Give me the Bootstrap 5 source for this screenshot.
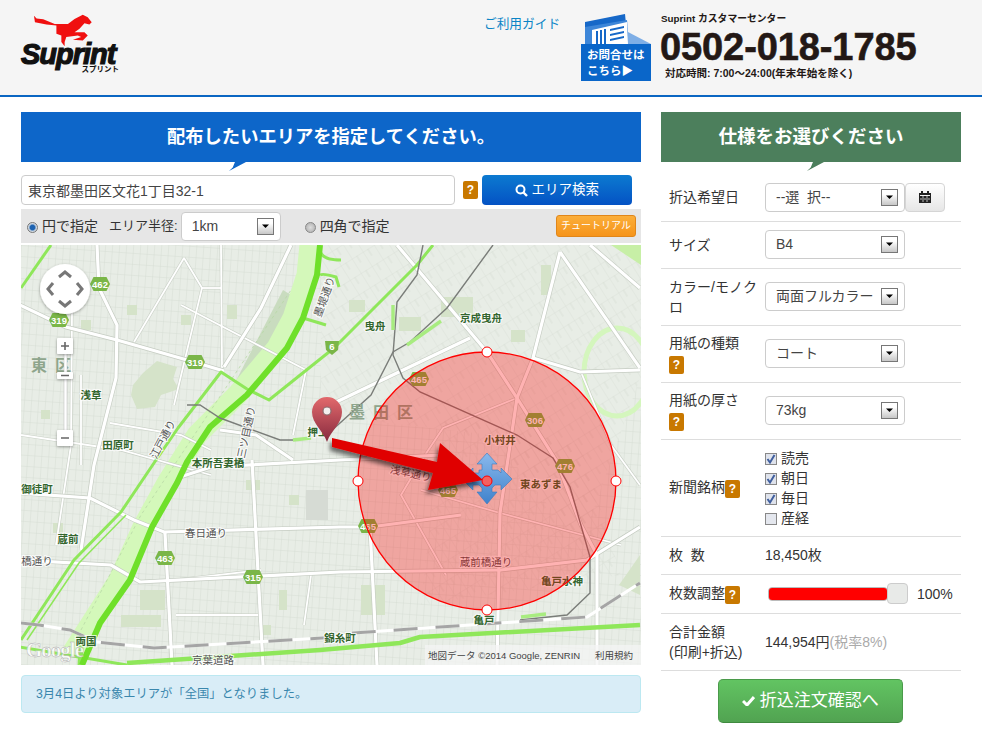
<!DOCTYPE html>
<html lang="ja">
<head>
<meta charset="UTF-8">
<meta name="viewport" content="width=device-width, initial-scale=1.0">
<title>Suprint</title>
<link href="https://cdn.jsdelivr.net/npm/bootstrap@5.3.0/dist/css/bootstrap.min.css" rel="stylesheet">
<style>
    body {
        background: #fff;
        color: #333;
        font-family: "Liberation Sans", "Noto Sans CJK JP", sans-serif;
        font-size: 14px;
        overflow: hidden;
    }
    .site-head {
        height: 97px;
        background: #f5f5f5;
        border-bottom: 2px solid #0a66c2;
    }
    .logo-box { width: 98px; margin: 14px 0 0 21px; }
    .logo-box svg { display: block; margin-left: 12px; }
    .logo-word {
        font-size: 29px; line-height: 20px; font-weight: 700; font-style: italic;
        color: #111; letter-spacing: -1px; -webkit-text-stroke: 1.2px #111;
        margin-top: -3px; white-space: nowrap;
    }
    .logo-kana { font-size: 7.500px; line-height: 8px; font-weight: 700; color: #111; text-align: right; margin-top: 2px; }
    .guide-link { margin: 14px 0 0 365px; width: 76px; font-size: 12.7px; line-height: 20px; color: #0a84c6; text-decoration: none; white-space: nowrap; }
    .contact-box { width: 70px; margin: 14px 0 0 21px; }
    .contact-box svg { display: block; }
    .contact-text {
        background: #0a66c9; color: #fff; height: 37px; font-size: 11.5px; line-height: 16px;
        font-weight: 700; padding: 3px 0 0 6px; white-space: nowrap;
    }
    .center-box { margin: 12px 0 0 9px; color: #231815; }
    .center-name { font-size: 9.8px; line-height: 14px; font-weight: 700; padding-left: 1px; }
    .center-tel { font-size: 38px; line-height: 40px; font-weight: 700; letter-spacing: -.1px; -webkit-text-stroke: .6px #231815; margin-top: 1px; }
    .center-hours { font-size: 10.5px; line-height: 13px; font-weight: 700; padding-left: 5px; }

    .page-main { padding: 15px 21px 0; gap: 20px; }
    .col-area { width: 620px; }
    .col-spec { width: 300px; }
    .title-band {
        position: relative; height: 50px; line-height: 50px; text-align: center;
        font-size: 18.3px; font-weight: 700; color: #fff;
    }
    .title-band::after {
        content: ""; position: absolute; top: 50px; left: 208px; width: 17px; height: 9px;
        background: inherit; clip-path: polygon(35% 0, 100% 0, 0 100%, 22% 60%);
    }
    .band-blue { background: #0d66c9; }
    .band-green { background: #4c7f5c; font-size: 18.5px; }
    .band-green::after { left: 146px; }

    .address-input, .address-input:focus {
        width: 434px; height: 30px; padding: 0 6px; font-size: 14px; color: #444;
        border: 1px solid #ccc; border-radius: 4px; box-shadow: none;
    }
    .help-mark {
        display: inline-block; width: 15px; height: 18px; line-height: 18px; text-align: center;
        background: #c87800; color: #fff; font-size: 12px; font-weight: 700; border-radius: 2px;
        vertical-align: middle;
    }
    .search-btn, .search-btn:hover {
        width: 150px; height: 30px; padding: 0; font-size: 13.5px; color: #fff; border: 0; border-radius: 4px;
        background: linear-gradient(#0c7ad0, #0452c4);
    }
    .radius-bar { height: 34px; background: #e6e6e6; padding: 0 5px 0 6px; margin-top: 4px; }
    .radius-bar .form-check-input {
        width: 11px; height: 11px; margin: 3px 4px 0 0; border: 1px solid #888; flex: none;
        background: radial-gradient(circle, #ddd, #aaa);
    }
    .radius-bar .form-check-input:checked { background: radial-gradient(circle, #1d62b0 35%, #cfd8e2 60%); border-color: #777; }
    .radius-label { margin-left: 11px; font-size: 13px; white-space: nowrap; }
    .tutorial-btn, .tutorial-btn:hover {
        width: 80px; height: 22px; padding: 0; font-size: 10px; line-height: 20px; color: #fff;
        background: linear-gradient(#fbae3a, #f6941a); border: 1px solid #e0861a; border-radius: 3px;
    }
    .old-select, .old-select:focus {
        height: 29px; padding: 0 24px 0 10px; font-size: 14px; color: #444; border: 1px solid #ccc; border-radius: 4px;
        box-shadow: none; background-color: #fff; background-size: 17px 17px; background-position: right 6px center;
        background-image: url("data:image/svg+xml,%3Csvg xmlns='http://www.w3.org/2000/svg' viewBox='0 0 17 17'%3E%3ClinearGradient id='g' x2='0' y2='1'%3E%3Cstop offset='.3' stop-color='%23fff'/%3E%3Cstop offset='1' stop-color='%23c4c4c4'/%3E%3C/linearGradient%3E%3Crect x='.5' y='.5' width='16' height='16' fill='url(%23g)' stroke='%23777'/%3E%3Cpath d='M5 6.5h7l-3.5 3.5z'/%3E%3C/svg%3E");
    }
    .radius-select { width: 100px; margin: 0 24px 0 3px; }
    .map-box { margin-top: 2px; height: 420px; }
    .map-box svg { display: block; }
    .map-label { font-size: 10.5px; font-weight: 700; fill: #33662e; stroke: #fff; stroke-width: 2.2px; stroke-opacity: .75; paint-order: stroke; text-anchor: middle; }
    .map-road-label { font-size: 10.5px; fill: #555; stroke: #fff; stroke-width: 2.2px; stroke-opacity: .8; paint-order: stroke; text-anchor: middle; }
    .map-shield { font-size: 9.5px; font-weight: 700; fill: #fff; text-anchor: middle; }
    .map-ward { font-size: 16px; font-weight: 700; fill: #8ea58c; text-anchor: middle; }
    .map-fine { font-size: 9.5px; fill: #444; }
    .map-google { font-family: "Liberation Serif", serif; font-size: 21px; font-weight: 700; fill: #fff; fill-opacity: .85; stroke: #aaa; stroke-width: .4px; }
    .notice-box {
        height: 38px; margin: 10px 0 0; padding: 0 14px; line-height: 36px; font-size: 12.3px;
        color: #3a87ad; background: #d9edf7; border: 1px solid #bce8f1; border-radius: 4px;
    }

    .spec-table { margin: 12px 0 0; table-layout: fixed; --bs-table-color: #333; --bs-table-border-color: #ddd; }
    .spec-table td { padding: 0 0 0 8px; vertical-align: middle; font-size: 14px; line-height: 20px; border-bottom-width: 1px; }
    .spec-table td:first-child { width: 104px; padding-right: 4px; }
    .spec-table td:last-child { padding-left: 0; }
    .spec-select { width: 140px; }
    .cal-btn, .cal-btn:hover {
        width: 40px; height: 29px; padding: 0; border: 1px solid #d5d5d5; border-radius: 4px;
        background: linear-gradient(#fff, #e6e6e6);
    }
    .paper-row { height: 57px; }
    .check-line { line-height: 20px; }
    .check-line .form-check-input {
        width: 12px; height: 12px; margin: 0 4px 0 0; border: 1px solid #888; border-radius: 0; float: none;
        vertical-align: -2px; background-color: #e4e7ee;
    }
    .check-line .form-check-input:checked {
        background-color: #dfe3ec; background-size: 12px;
        background-image: url("data:image/svg+xml,%3Csvg xmlns='http://www.w3.org/2000/svg' viewBox='0 0 12 12'%3E%3Cpath d='M2.5 6l2.5 3.5L9.5 2' fill='none' stroke='%23405f9e' stroke-width='2'/%3E%3C/svg%3E");
    }
    .rate-bar { width: 120px; height: 14px; margin-left: 3px; background: #ddd; border: 1px solid #bbb; border-radius: 4px; }
    .rate-fill { background: #f00; }
    .rate-handle { width: 21px; height: 21px; margin: 0 9px 0 -1px; background: #e8eae8; border: 1px solid #ccc; border-radius: 4px; flex: none; }
    .tax-note { color: #aaa; }
    .order-btn, .order-btn:hover {
        display: block; width: 185px; height: 44px; margin: 8px auto 0 57px; padding: 0; font-size: 17px; color: #fff;
        background: linear-gradient(#62c462, #51a351); border: 1px solid #4a9a4a; border-bottom-color: #3f8a3f; border-radius: 5px;
    }
</style>
</head>
<body>
    <header class="site-head d-flex">
        <div class="logo-box">
            <svg width="60" height="33" viewBox="100 40 180 100"><path fill="#f01010" d="M102 45l8 9 20 2 35 14h40l20-15 25-13 15 8 12 15-7 7-15-4-15 17-15 10h30l10 10-15 15-30-2 25-8-10-5-35 5-5 15v13l-10-13v-20l-15-5v-25l-30-3-35-7z"/></svg>
            <div class="logo-word">Suprint</div>
            <div class="logo-kana">スプリント</div>
        </div>
        <a class="guide-link" href="#">ご利用ガイド</a>
        <div class="contact-box">
            <svg width="70" height="30" viewBox="0 0 70 30">
                <path fill="#1668c8" d="M4 8L44 0l3 30H4z"/>
                <path fill="#3d86d8" d="M4 13l42-7 2 24H4z"/>
                <path fill="#fff" d="M11 16l35-8 1 22H11z"/>
                <path fill="#1668c8" d="M15 17h2v13h-2zM19 16h2v14h-2zM23 15h2v15h-2zM29 15l14-3v2l-14 3zM29 20l14-3v2l-14 3zM29 25l14-3v2l-14 3z"/>
                <path fill="#7eaee6" d="M47 18l23 12H47z"/>
            </svg>
            <div class="contact-text">お問合せは<br>こちら▶</div>
        </div>
        <div class="center-box">
            <div class="center-name">Suprint カスタマーセンター</div>
            <div class="center-tel">0502-018-1785</div>
            <div class="center-hours">対応時間: 7:00〜24:00(年末年始を除く)</div>
        </div>
    </header>

    <main class="page-main d-flex">
        <section class="col-area">
            <div class="title-band band-blue">配布したいエリアを指定してください。</div>
            <div class="d-flex align-items-center" style="margin-top:13px">
                <input type="text" class="form-control address-input" value="東京都墨田区文花1丁目32-1">
                <span class="help-mark ms-2 me-1">?</span>
                <button class="btn search-btn">
                    <svg width="13" height="13" viewBox="0 0 13 13" class="align-middle"><circle cx="5.5" cy="5.5" r="4" fill="none" stroke="#fff" stroke-width="2"/><path d="M8.5 8.5l3.5 3.5" stroke="#fff" stroke-width="2.4"/></svg>
                    エリア検索
                </button>
            </div>
            <div class="radius-bar d-flex align-items-center">
                <input class="form-check-input" type="radio" name="shape" checked>
                <span>円で指定</span>
                <span class="radius-label">エリア半径:</span>
                <select class="form-select old-select radius-select"><option>1km</option></select>
                <input class="form-check-input" type="radio" name="shape">
                <span>四角で指定</span>
                <button class="btn tutorial-btn ms-auto">チュートリアル</button>
            </div>
            <div class="map-box">
                <svg width="620" height="420" viewBox="0 0 620 420">
                    <defs>
                        <pattern id="blockA" width="7" height="11" patternUnits="userSpaceOnUse" patternTransform="rotate(4)">
                            <path d="M0 0H7M0 0V11" stroke="#d3d9d0" stroke-width=".8" fill="none"/>
                        </pattern>
                        <pattern id="blockB" width="13" height="17" patternUnits="userSpaceOnUse" patternTransform="rotate(-32)">
                            <path d="M0 0H13M0 0V17M6 0V8" stroke="#d6dcd3" stroke-width=".7" fill="none"/>
                        </pattern>
                        <linearGradient id="pinFill" x2="0" y2="1"><stop offset="0" stop-color="#e2696c"/><stop offset="1" stop-color="#872a3e"/></linearGradient>
                        <linearGradient id="moveFill" x2="0" y2="1"><stop offset="0" stop-color="#8ab9ec"/><stop offset="1" stop-color="#3f82cc"/></linearGradient>
                        <filter id="arrowShadow" x="-20%" y="-30%" width="140%" height="170%"><feDropShadow dx="-2" dy="4" stdDeviation="2" flood-color="#000" flood-opacity=".55"/></filter>
                        <filter id="softShadow" x="-20%" y="-20%" width="140%" height="140%"><feDropShadow dx="0" dy="1" stdDeviation="1.5" flood-color="#000" flood-opacity=".35"/></filter>
                        <polygon id="shieldShape" points="-10,0 -6.500,-7 6.500,-7 10,0 6.500,7 -6.500,7" fill="#7ab648"/>
                        <g id="bigRoads" fill="none">
                            <path d="M-1 60L45 82 96 95 166 115 203 126"/>
                            <path d="M203 122L240 63 270 0"/>
                            <path d="M76 0L78 43 96 80 95 133 73 220 60 305"/>
                            <path d="M159 232L190 222 319 215 420 210"/>
                            <path d="M-1 315L90 320 119 337 319 327 480 325 566 315 619 282"/>
                            <path d="M376 0L466 107 496 153 536 217 560 280 576 310 576 420"/>
                            <path d="M569 0L619 43"/>
                            <path d="M539 7L619 123"/>
                            <path d="M512 113L559 127 619 125"/>
                            <path d="M539 7L512 113 496 153 479 268 476 420"/>
                            <path d="M449 93L309 160"/>
                            <path d="M-1 248L69 253 113 275 143 287 319 282 349 282 440 270"/>
                            <path d="M231 215L242 420"/>
                            <path d="M144 288L151 420"/>
                            <path d="M349 282L356 420"/>
                            <path d="M199 185L235 190 272 215"/>
                        </g>
                        <g id="smallRoads" fill="none">
                            <path d="M163 13L113 97"/>
                            <path d="M163 13L181 43 153 160"/>
                            <path d="M200 0L201 123"/>
                            <path d="M181 43H200"/>
                            <path d="M51 65L50 200 35 300"/>
                            <path d="M89 178L160 190 190 205"/>
                            <path d="M0 190L100 205 190 230"/>
                            <path d="M155 335L240 325M155 370H240"/>
                            <path d="M422 183L496 153M422 183L402 213 380 250 425 330"/>
                            <path d="M400 245L479 268 600 300"/>
                            <path d="M160 60L285 125 272 190"/>
                            <path d="M560 127L590 200 619 240"/>
                            <path d="M290 330L283 380M60 220L60 130"/>
                        </g>
                    </defs>

                    <rect width="620" height="420" fill="#e8ede6"/>
                    <rect width="620" height="420" fill="url(#blockA)"/>
                    <path d="M300 0H620V130L560 300 470 190 300 170z" fill="#e8ede6"/>
                    <path d="M300 0H620V130L560 300 470 190 300 170z" fill="url(#blockB)"/>
                    <path d="M420 170L560 200 600 330 400 360z" fill="url(#blockB)"/>

                    <!-- parks -->
                    <g fill="#d5e3c9">
                        <path d="M112 140l10-12 14-12 20 6-4 12 6 10-18 6-6 12-18 2-6-14z"/>
                        <path d="M60 75h10v10H60zM106 60h10v10h-10zM206 60h10v14h-10zM160 70h10v10h-10zM20 165h9v9h-9zM238 110h10v10h-10z"/>
                        <path d="M378 72h22v14h-22zM328 55h16v12h-16zM420 52h32v20h-32zM520 20h10v30h-10zM490 85h14v12h-14z"/>
                        <path d="M32 278h10v10H32zM225 235h14v10h-14zM268 250h10v10h-10zM120 265h10v10h-10zM258 345h8v20h-8zM240 380h10v10h-10z"/>
                        <path d="M119 345h25v20h-25zM100 370h40v12h-40zM340 340h24v30h-24zM598 340l21-30v40z"/>
                    </g>
                    <path d="M205 155L262 45 278 55 226 150z" fill="#c9dcbf"/>
                    <path d="M590 0H620V20z" fill="#c7efa6"/>
                    <rect x="285" y="245" width="22" height="30" fill="#d6dbd4"/>
                    <ellipse cx="596" cy="127" rx="33" ry="44" fill="none" stroke="#d4f6bd" stroke-width="5"/>

                    <!-- river park -->
                    <path d="M50 410L98 335 122 282 146 238 176 190 216 150 256 103 272 73 286 30 289 0" fill="none" stroke="#d4f8ba" stroke-width="21"/>
                    <path d="M60 385L120 270 190 165 270 45" fill="none" stroke="#b8d8a6" stroke-width=".8" stroke-dasharray="3 3"/>

                    <!-- roads -->
                    <use href="#smallRoads" stroke="#c9d0c6" stroke-width="3"/>
                    <use href="#smallRoads" stroke="#fff" stroke-width="1.8"/>
                    <use href="#bigRoads" stroke="#c5ccc2" stroke-width="4.5"/>
                    <use href="#bigRoads" stroke="#fff" stroke-width="3.2"/>

                    <!-- green roads -->
                    <g fill="none" stroke="#8fe75a" stroke-linejoin="round">
                        <path d="M0 43L30 0" stroke-width="3"/>
                        <path d="M0 395L53 315 100 267 133 218 157 183 200 127 226 144 248 155 313 103 396 20 412 0" stroke-width="3"/>
                        <path d="M6 395L58 318 105 270" stroke-width="1.5"/>
                        <path d="M-1 402L106 420" stroke-width="3"/>
                        <path d="M106 418L299 405 379 398 399 392 619 380" stroke-width="4.5"/>
                        <path d="M60 400L59 420" stroke-width="5"/>
                        <path d="M282 73L305 80" stroke-width="3"/>
                        <path d="M299 5Q300 15 320 15" stroke-width="3"/>
                        <path d="M299 30Q302 28 315 32L318 42" stroke-width="3"/>
                    </g>
                    <path d="M61 420L79 378 109 335 131 282 156 238 166 217 189 182 226 150 266 103 282 73 296 30 299 0" fill="none" stroke="#6fe02a" stroke-width="6"/>

                    <!-- railway -->
                    <g fill="none" stroke="#7a7d79" stroke-width="1.4">
                        <path d="M402 0L396 30 376 57 372 110 382 133 399 147 496 190 532 213 549 242 569 312 569 348 546 370 499 375"/>
                        <path d="M472 0L426 63 389 97 372 107 350 150 309 187"/>
                        <path d="M166 160H179L199 173 259 195H272"/>
                    </g>
                    <g fill="none" stroke="#a8ec80" stroke-width="3.4">
                        <path d="M272 195L290 193M372 60L372 85M386 100L420 76M500 372L525 369"/>
                    </g>
                    <path d="M-1 378L18 380 49 385 76 397 133 403 319 392 332 388 566 372 619 338" fill="none" stroke="#fff" stroke-width="3"/>
                    <path d="M-1 378L18 380 49 385 76 397 133 403 319 392 332 388 566 372 619 338" fill="none" stroke="#a5a5a5" stroke-width="3" stroke-dasharray="24 18"/>

                    <!-- labels -->
                    <text class="map-ward" x="30" y="126" textLength="40">東 区</text>
                    <text class="map-ward" x="360" y="173" textLength="64">墨 田 区</text>
                    <text class="map-label" x="70" y="154">浅草</text>
                    <text class="map-label" x="97" y="204">田原町</text>
                    <text class="map-label" x="197" y="222">本所吾妻橋</text>
                    <text class="map-label" x="16" y="248">御徒町</text>
                    <text class="map-label" x="47" y="298">蔵前</text>
                    <text class="map-label" x="65" y="400">両国</text>
                    <text class="map-label" x="319" y="397">錦糸町</text>
                    <text class="map-label" x="460" y="77">京成曳舟</text>
                    <text class="map-label" x="354" y="85">曳舟</text>
                    <text class="map-label" x="297" y="191">押上</text>
                    <text class="map-label" x="479" y="199">小村井</text>
                    <text class="map-label" x="520" y="243">東あずま</text>
                    <text class="map-label" x="541" y="340">亀戸水神</text>
                    <text class="map-label" x="463" y="379">亀戸</text>
                    <text class="map-road-label" x="192" y="419">京葉道路</text>
                    <text class="map-road-label" x="16" y="320">橋通り</text>
                    <text class="map-road-label" x="185" y="292">春日通り</text>
                    <text class="map-road-label" x="465" y="321">蔵前橋通り</text>
                    <text class="map-road-label" transform="translate(389 232) rotate(12)">浅草通り</text>
                    <text class="map-road-label" transform="translate(307 53) rotate(-70)">墨堤通り</text>
                    <text class="map-road-label" transform="translate(145 196) rotate(-62)">江戸通り</text>
                    <text class="map-road-label" transform="translate(229 188) rotate(-78)">三ツ目通り</text>

                    <!-- route shields -->
                    <use href="#shieldShape" x="79" y="39"/><text class="map-shield" x="79" y="43">462</text>
                    <use href="#shieldShape" x="38" y="75"/><text class="map-shield" x="38" y="79">319</text>
                    <use href="#shieldShape" x="174" y="117"/><text class="map-shield" x="174" y="121">319</text>
                    <use href="#shieldShape" x="144" y="313"/><text class="map-shield" x="144" y="317">463</text>
                    <use href="#shieldShape" x="232" y="332"/><text class="map-shield" x="232" y="336">315</text>
                    <path d="M304 96h14l-1 9-6 5-6-5z" fill="#7ab648"/><text class="map-shield" x="311" y="105">6</text>
                    <use href="#shieldShape" x="398" y="134"/><text class="map-shield" x="398" y="138">465</text>
                    <use href="#shieldShape" x="514" y="175"/><text class="map-shield" x="514" y="179">306</text>
                    <use href="#shieldShape" x="544" y="221"/><text class="map-shield" x="544" y="225">476</text>
                    <use href="#shieldShape" x="347" y="281"/><text class="map-shield" x="347" y="285">465</text>
                    <use href="#shieldShape" x="427" y="245"/><text class="map-shield" x="427" y="249">465</text>

                    <!-- radius circle -->
                    <circle cx="466" cy="236" r="129" fill="#ff0000" fill-opacity=".3" stroke="#f00" stroke-width="1.3"/>
                    <g fill="#fff" stroke="#f00" stroke-width="1">
                        <circle cx="466" cy="107" r="5"/>
                        <circle cx="466" cy="365" r="5"/>
                        <circle cx="337" cy="236" r="5"/>
                        <circle cx="595" cy="236" r="5"/>
                    </g>

                    <!-- move handle -->
                    <path d="M466 208l10 11h-5v6h6l3 3v-5l11 11-11 11v-5h-6l-3 3h-0v4h5l-10 12-10-12h5v-4l-3-3h-6v5l-11-11 11-11v5h6v-3h3v-6h-5z" fill="url(#moveFill)" stroke="#3b78bd" stroke-width=".6"/>

                    <!-- arrow -->
                    <path d="M311 193L416 217 419 198 462 235 407 245 412 228 311 202z" fill="#e00000" filter="url(#arrowShadow)"/>
                    <circle cx="466" cy="236" r="5" fill="#f4615f" stroke="#f00"/>

                    <!-- marker -->
                    <path d="M306 197c-4-12-15-18-15-30a15 15 0 0 1 30 0c0 12-11 18-15 30z" fill="url(#pinFill)"/>
                    <circle cx="306" cy="166" r="4" fill="#f3eeee" stroke="#8b6a6c" stroke-width="1.2"/>

                    <!-- pan control -->
                    <g filter="url(#softShadow)">
                        <circle cx="44" cy="44" r="25" fill="#fff"/>
                    </g>
                    <g fill="none" stroke="#777" stroke-width="3">
                        <path d="M38 32l6-5 6 5M38 56l6 5 6-5M32 38l-5 6 5 6M56 38l5 6-5 6"/>
                    </g>

                    <!-- zoom control -->
                    <rect x="43" y="108" width="3" height="90" fill="#fff" stroke="#bbb" stroke-width=".5"/>
                    <g filter="url(#softShadow)" fill="#fff">
                        <rect x="36" y="93" width="16" height="16" rx="1"/>
                        <rect x="36" y="127" width="16" height="7" rx="1"/>
                        <rect x="36" y="185" width="16" height="16" rx="1"/>
                    </g>
                    <path d="M40 101h8M44 97v8M40 193h8M40 130.500h8" stroke="#666" stroke-width="1.6"/>

                    <!-- map footer -->
                    <text class="map-google" x="5" y="412" textLength="58">Google</text>
                    <rect x="404" y="400" width="216" height="20" fill="#f5f5f5" fill-opacity=".7"/>
                    <text class="map-fine" x="407" y="414">地図データ ©2014 Google, ZENRIN</text>
                    <text class="map-fine" x="574" y="414">利用規約</text>
                </svg>
            </div>
            <div class="notice-box">3月4日より対象エリアが「全国」となりました。</div>
        </section>

        <section class="col-spec">
            <div class="title-band band-green">仕様をお選びください</div>
            <table class="table spec-table">
                <tbody>
                    <tr style="height:47px">
                        <td>折込希望日</td>
                        <td>
                            <div class="d-flex">
                                <select class="form-select old-select spec-select"><option>--選&nbsp;&nbsp;択--</option></select>
                                <button class="btn cal-btn">
                                    <svg width="12" height="12" viewBox="0 0 12 12" class="d-block mx-auto"><path fill="#222" d="M0 2h2V0h2v2h4V0h2v2h2v10H0zM1 4v7h10V4z"/><path fill="#222" d="M1 5h10v6H1z"/><path fill="#bbb" d="M3.500 5v6h1V5zM7.500 5v6h1V5zM1 7.500h10v1H1z"/></svg>
                                </button>
                            </div>
                        </td>
                    </tr>
                    <tr style="height:47px">
                        <td>サイズ</td>
                        <td><select class="form-select old-select spec-select"><option>B4</option></select></td>
                    </tr>
                    <tr class="paper-row">
                        <td>カラー/モノクロ</td>
                        <td><select class="form-select old-select spec-select"><option>両面フルカラー</option></select></td>
                    </tr>
                    <tr class="paper-row">
                        <td>用紙の種類<br><span class="help-mark">?</span></td>
                        <td><select class="form-select old-select spec-select"><option>コート</option></select></td>
                    </tr>
                    <tr class="paper-row">
                        <td>用紙の厚さ<br><span class="help-mark">?</span></td>
                        <td><select class="form-select old-select spec-select"><option>73kg</option></select></td>
                    </tr>
                    <tr style="height:97px">
                        <td class="text-nowrap">新聞銘柄<span class="help-mark">?</span></td>
                        <td>
                            <div class="check-line"><input class="form-check-input" type="checkbox" checked>読売</div>
                            <div class="check-line"><input class="form-check-input" type="checkbox" checked>朝日</div>
                            <div class="check-line"><input class="form-check-input" type="checkbox" checked>毎日</div>
                            <div class="check-line"><input class="form-check-input" type="checkbox">産経</div>
                        </td>
                    </tr>
                    <tr style="height:38px">
                        <td>枚&nbsp;&nbsp;数</td>
                        <td>18,450枚</td>
                    </tr>
                    <tr style="height:39px">
                        <td class="text-nowrap">枚数調整<span class="help-mark">?</span></td>
                        <td>
                            <div class="d-flex align-items-center">
                                <div class="progress rate-bar"><div class="progress-bar rate-fill" style="width:100%"></div></div>
                                <span class="rate-handle"></span>
                                <span>100%</span>
                            </div>
                        </td>
                    </tr>
                    <tr class="paper-row">
                        <td class="text-nowrap">合計金額<br>(印刷+折込)</td>
                        <td>144,954円<span class="tax-note">(税率8%)</span></td>
                    </tr>
                </tbody>
            </table>
            <button class="btn order-btn">
                <svg width="13" height="11" viewBox="0 0 13 11" class="align-baseline"><path d="M1 6l4 4 7-8" fill="none" stroke="#fff" stroke-width="3"/></svg>
                折込注文確認へ
            </button>
        </section>
    </main>

    <script src="https://cdn.jsdelivr.net/npm/bootstrap@5.3.0/dist/js/bootstrap.bundle.min.js"></script>
</body>
</html>
